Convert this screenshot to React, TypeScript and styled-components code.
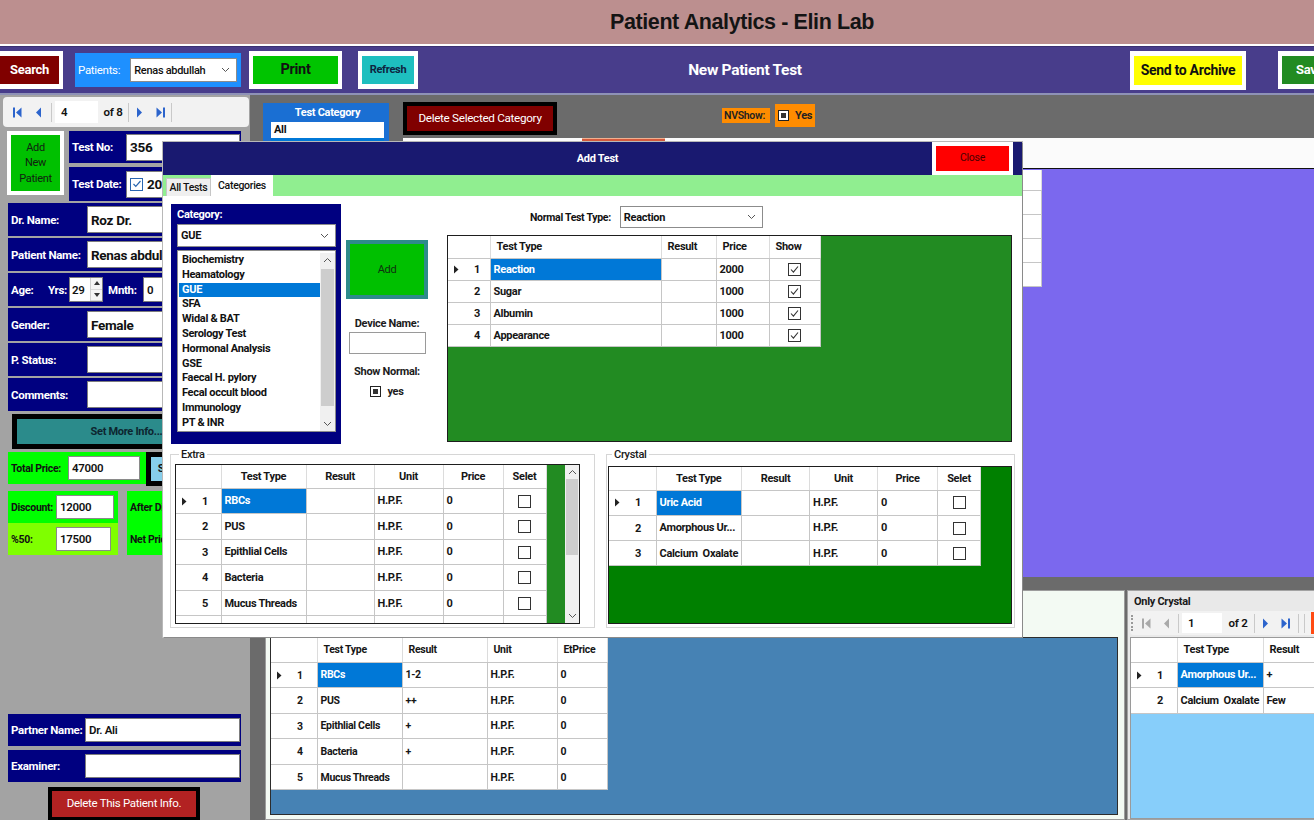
import React from "react";
import styled, { createGlobalStyle } from "styled-components";

const UI_FONT = `Roboto, "Liberation Sans", Arial, sans-serif`;

const GlobalStyle = createGlobalStyle`
  * { box-sizing: border-box; }
  html, body { margin: 0; padding: 0; }
  body {
    width: 1314px;
    height: 820px;
    overflow: hidden;
    background: #6b6b6b;
    font-family: ${UI_FONT};
    font-size: 11px;
    letter-spacing: -0.3px;
    color: #111;
  }
`;

/* ---------- page frame ---------- */

const Page = styled.div`
  position: relative;
  width: 1314px;
  height: 820px;
  display: flex;
  flex-direction: column;
  overflow: hidden;
`;

const TitleBar = styled.header`
  flex: none;
  height: 46px;
  background: #bc8f8f;
  border-bottom: 2px solid #ffffff;
  display: flex;
  align-items: center;
  justify-content: center;
  padding-left: 170px;
  font-family: "Liberation Sans", Arial, sans-serif;
  font-weight: 700;
  font-size: 21.5px;
  letter-spacing: -0.4px;
  color: #141414;
`;

const Toolbar = styled.div`
  flex: none;
  height: 49px;
  background: #483d8b;
  border-top: 1px solid #3a3172;
  border-bottom: 2px solid #8e92b6;
  display: flex;
  align-items: center;
`;

const FrameButton = styled.button<{
  $frame: string;
  $fill: string;
  $fg: string;
  $w: number;
  $h: number;
  $fs?: number;
  $bw?: number;
  $weight?: number;
}>`
  flex: none;
  width: ${(p) => p.$w}px;
  height: ${(p) => p.$h}px;
  border: ${(p) => p.$bw ?? 4}px solid ${(p) => p.$frame};
  background: ${(p) => p.$fill};
  color: ${(p) => p.$fg};
  font-family: inherit;
  letter-spacing: inherit;
  font-size: ${(p) => p.$fs ?? 11}px;
  font-weight: ${(p) => p.$weight ?? 700};
  padding: 0;
  margin: 0;
  display: flex;
  align-items: center;
  justify-content: center;
  text-align: center;
  line-height: 1.2;
  white-space: nowrap;
`;

const SearchButton = styled(FrameButton)`
  margin-left: -4px;
  border-top-width: 5px;
  border-bottom-width: 5px;
`;

const ToolbarButton = styled(FrameButton)<{ $ml: number }>`
  margin-left: ${(p) => p.$ml}px;
  border-top-width: 5px;
  border-bottom-width: 5px;
`;

const SaveButton = styled(ToolbarButton)`
  margin-right: -44px;
  justify-content: flex-start;
  padding-left: 14px;
`;

const PatientsBox = styled.div`
  flex: none;
  margin-left: 12px;
  width: 166px;
  height: 34px;
  background: #1e90ff;
  display: flex;
  align-items: center;
  padding-left: 3px;
  gap: 10px;
  color: #fff;
  font-size: 11.5px;
`;

const ComboBox = styled.div<{ $w: number; $h: number; $fs?: number; $weight?: number }>`
  flex: none;
  width: ${(p) => p.$w}px;
  height: ${(p) => p.$h}px;
  background: #fff;
  border: 1px solid #8c8c8c;
  display: flex;
  align-items: center;
  justify-content: space-between;
  padding: 0 6px 0 3px;
  font-weight: ${(p) => p.$weight ?? 700};
  font-size: ${(p) => p.$fs ?? 11}px;
  color: #111;
  white-space: nowrap;
`;

const ToolbarTitle = styled.div`
  flex: 1;
  text-align: center;
  padding-right: 58px;
  color: #fff;
  font-weight: 700;
  font-size: 15.5px;
`;

const Body = styled.div`
  flex: 1;
  min-height: 0;
  display: flex;
`;

/* ---------- left panel ---------- */

const LeftPanel = styled.aside`
  flex: none;
  width: 250px;
  background: #a3a3a3;
  display: flex;
  flex-direction: column;
  padding-top: 2px;
`;

const NavBar = styled.div<{ $h: number; $pl: number }>`
  flex: none;
  height: ${(p) => p.$h}px;
  background: #f2f2f2;
  border-radius: 4px;
  display: flex;
  align-items: center;
  padding-left: ${(p) => p.$pl}px;
  font-size: 11px;
  font-weight: 700;
  color: #111;
`;

const LeftNav = styled(NavBar)`
  margin: 0 1px 0 3px;
`;

const NavButton = styled.span<{ $w: number }>`
  flex: none;
  width: ${(p) => p.$w}px;
  display: flex;
  align-items: center;
  justify-content: center;
`;

const NavSep = styled.span<{ $mx: number }>`
  flex: none;
  width: 1px;
  height: 19px;
  margin: 0 ${(p) => p.$mx}px;
  background: #c9c9c9;
`;

const NavText = styled.div<{ $w: number; $h: number }>`
  flex: none;
  width: ${(p) => p.$w}px;
  height: ${(p) => p.$h}px;
  margin-left: 1px;
  background: #fff;
  display: flex;
  align-items: center;
  padding-left: 6px;
  font-size: 11.5px;
  font-weight: 600;
`;

const NavCount = styled.span<{ $w: number }>`
  flex: none;
  width: ${(p) => p.$w}px;
  text-align: center;
  font-size: 11.5px;
  font-weight: 600;
`;

const NavGrip = styled.span`
  flex: none;
  width: 5px;
  height: 16px;
  border-left: 2px dotted #9a9a9a;
  margin-left: 1px;
`;

const NavStop = styled.span`
  flex: none;
  width: 12px;
  height: 22px;
  background: #ff4a12;
  margin-left: 4px;
`;

const TopBlock = styled.div`
  flex: none;
  display: flex;
  margin-top: 4px;
  padding-left: 7px;
  gap: 5px;
`;

const AddPatientButton = styled(FrameButton)`
  line-height: 1.4;
  white-space: normal;
  padding: 0 6px;
`;

const TopFields = styled.div`
  flex: none;
  width: 172px;
  display: flex;
  flex-direction: column;
  gap: 4px;
`;

const FieldPanel = styled.div<{ $h: number; $ml?: number; $w?: number }>`
  flex: none;
  height: ${(p) => p.$h}px;
  width: ${(p) => (p.$w ? `${p.$w}px` : "auto")};
  margin-left: ${(p) => p.$ml ?? 0}px;
  background: #000080;
  display: flex;
  align-items: center;
  padding: 0 1px 0 3px;
  color: #fff;
`;

const FieldLabel = styled.span<{ $w: number }>`
  flex: none;
  width: ${(p) => p.$w}px;
  font-weight: 700;
  font-size: 11.5px;
  color: #fff;
  white-space: nowrap;
`;

const FieldInput = styled.div<{ $big?: boolean; $h?: number }>`
  flex: 1;
  min-width: 0;
  height: ${(p) => p.$h ?? 27}px;
  background: #fff;
  border: 1px solid #7d7d7d;
  display: flex;
  align-items: center;
  gap: 4px;
  padding: 0 3px;
  font-size: ${(p) => (p.$big ? 13.5 : 11.5)}px;
  font-weight: ${(p) => (p.$big ? 700 : 600)};
  color: #111;
  white-space: nowrap;
  overflow: hidden;
`;

const FieldList = styled.div`
  flex: none;
  margin-top: 2px;
  display: flex;
  flex-direction: column;
  gap: 2px;
  width: 241px;
`;

const AgeText = styled.span<{ $w: number }>`
  flex: none;
  width: ${(p) => p.$w}px;
  font-weight: 700;
  font-size: 11.5px;
  color: #fff;
  white-space: nowrap;
`;

const Spinner = styled.div`
  flex: none;
  width: 34px;
  height: 25px;
  background: #fff;
  border: 1px solid #7d7d7d;
  display: flex;
  align-items: center;
  justify-content: space-between;
  padding-left: 2px;
  font-size: 11.5px;
  font-weight: 600;
  color: #111;
`;

const SpinButtons = styled.div`
  flex: none;
  width: 12px;
  height: 100%;
  display: flex;
  flex-direction: column;
  border-left: 1px solid #cfcfcf;
`;

const SpinPart = styled.span`
  flex: 1;
  display: flex;
  align-items: center;
  justify-content: center;
  background: #f4f4f4;
  border-bottom: 1px solid #dadada;
`;

const MonthInput = styled(FieldInput)`
  flex: none;
  width: 40px;
  height: 25px;
  font-size: 11.5px;
  font-weight: 600;
`;

const MoreInfoButton = styled(FrameButton)`
  margin: 3px 0 0 12px;
  border-width: 5px;
`;

const PriceRow = styled.div`
  flex: none;
  display: flex;
  margin-top: 3px;
  padding-left: 8px;
`;

const LimeBox = styled.div<{ $w: number; $h: number; $bg?: string }>`
  flex: none;
  width: ${(p) => p.$w}px;
  height: ${(p) => p.$h}px;
  background: ${(p) => p.$bg ?? "#00ff00"};
  display: flex;
  align-items: center;
  padding-left: 3px;
  font-weight: 700;
  font-size: 10.5px;
  color: #111;
  white-space: nowrap;
  overflow: hidden;
`;

const LimeLabel = styled.span<{ $w: number }>`
  flex: none;
  width: ${(p) => p.$w}px;
`;

const LimeInput = styled.div<{ $w: number }>`
  flex: none;
  width: ${(p) => p.$w}px;
  height: 24px;
  background: #fff;
  border: 1px solid #8a8a8a;
  display: flex;
  align-items: center;
  padding-left: 3px;
  font-size: 11.5px;
  font-weight: 600;
`;

const DiscountRow = styled.div`
  flex: none;
  display: flex;
  margin-top: 5px;
  padding-left: 8px;
  gap: 9px;
`;

const StackBox = styled.div`
  flex: none;
  display: flex;
  flex-direction: column;
`;

const AfterBox = styled.div`
  flex: none;
  width: 60px;
  height: 64px;
  background: #00ff00;
  display: flex;
  flex-direction: column;
  justify-content: space-around;
  padding-left: 3px;
  font-weight: 700;
  font-size: 10.5px;
  white-space: nowrap;
`;

const LeftSpacer = styled.div`
  flex: 1;
`;

const BottomFields = styled.div`
  flex: none;
  display: flex;
  flex-direction: column;
  gap: 4px;
  padding-left: 8px;
`;

const DeletePatientButton = styled(FrameButton)`
  margin: 5px 0 -1px 48px;
`;

/* ---------- main area ---------- */

const MainArea = styled.main`
  flex: 1;
  min-width: 0;
  display: flex;
  flex-direction: column;
  background: #6b6b6b;
`;

const UpperSection = styled.div`
  flex: none;
  height: 482px;
  display: flex;
`;

const CategoryColumn = styled.div`
  flex: none;
  margin-left: 13px;
  padding-top: 8px;
`;

const TestCategoryBox = styled.div`
  width: 126px;
  height: 300px;
  background: #1a6fd3;
  display: flex;
  flex-direction: column;
  padding: 0 5px 0 8px;
`;

const TestCategoryTitle = styled.div`
  height: 19px;
  display: flex;
  align-items: center;
  justify-content: center;
  color: #fff;
  font-weight: 700;
  font-size: 11px;
`;

const TestCategoryList = styled.div`
  flex: 1;
  background: #fff;
`;

const ListItem = styled.div<{ $selected?: boolean; $h: number }>`
  height: ${(p) => p.$h}px;
  line-height: ${(p) => p.$h}px;
  padding-left: 3px;
  font-weight: 700;
  font-size: 11px;
  white-space: nowrap;
  background: ${(p) => (p.$selected ? "#0078d7" : "transparent")};
  color: ${(p) => (p.$selected ? "#fff" : "#111")};
`;

const WorkColumn = styled.div`
  flex: 1;
  min-width: 0;
  margin-left: 14px;
  display: flex;
  flex-direction: column;
`;

const ActionRow = styled.div`
  flex: none;
  height: 43px;
  display: flex;
  align-items: flex-start;
`;

const DeleteCategoryButton = styled(FrameButton)`
  margin-top: 7px;
`;

const NVShow = styled.div`
  flex: none;
  margin: 9px 0 0 165px;
  display: flex;
  align-items: flex-start;
  gap: 5px;
`;

const NVLabel = styled.span`
  margin-top: 4px;
  height: 15px;
  width: 48px;
  background: #ff8c00;
  display: flex;
  align-items: center;
  padding-left: 2px;
  font-size: 10.5px;
  font-weight: 600;
  color: #222;
`;

const NVCheck = styled.span`
  height: 23px;
  width: 40px;
  background: #ff8c00;
  display: flex;
  align-items: center;
  gap: 6px;
  padding-left: 3px;
  font-size: 11px;
  font-weight: 700;
  color: #222;
`;

const FilledCheck = styled.span<{ $size: number }>`
  flex: none;
  width: ${(p) => p.$size}px;
  height: ${(p) => p.$size}px;
  border: 1px solid #222;
  background: #fff;
  padding: 2px;
  display: flex;
  &::after {
    content: "";
    flex: 1;
    background: #333;
  }
`;

const ResultsPanel = styled.div`
  flex: 1;
  display: flex;
  flex-direction: column;
`;

const ResultsStrip = styled.div`
  flex: none;
  height: 31px;
  background: #fbfbfb;
  border-bottom: 1px solid #111;
  display: flex;
  align-items: flex-start;
  padding-left: 179px;
`;

const StripButton = styled.span`
  flex: none;
  width: 83px;
  height: 24px;
  background: #d45a3c;
  border-top: 1px solid #f0b090;
`;

const ResultsBody = styled.div`
  flex: 1;
  background: #7b68ee;
  padding-top: 1px;
`;

const LowerSection = styled.div`
  flex: 1;
  display: flex;
  padding: 13px 0 0 15px;
  gap: 2px;
`;

const BottomPanel = styled.div`
  flex: none;
  width: 860px;
  height: 230px;
  background: #f3faf3;
  border: 1px solid #9c9c9c;
  padding: 46px 6px 4px 4px;
  display: flex;
`;

const GridFrame = styled.div<{ $bg: string; $w?: number; $h?: number; $border?: string }>`
  flex: ${(p) => (p.$w ? "none" : "1")};
  width: ${(p) => (p.$w ? `${p.$w}px` : "auto")};
  height: ${(p) => (p.$h ? `${p.$h}px` : "100%")};
  background: ${(p) => p.$bg};
  border: 1px solid ${(p) => p.$border ?? "#1e1e1e"};
  display: flex;
  overflow: hidden;
`;

const GridFill = styled.div`
  flex: 1;
`;

const OnlyCrystalBox = styled.section`
  flex: none;
  width: 200px;
  height: 230px;
  background: #e9e9e9;
  border: 1px solid #a3a3a3;
  padding: 0 0 0 2px;
  display: flex;
  flex-direction: column;
`;

const GroupTitle = styled.div`
  flex: none;
  height: 20px;
  display: flex;
  align-items: center;
  padding-left: 4px;
  font-size: 11px;
  font-weight: 700;
  color: #1a1a1a;
`;

const CrystalNav = styled(NavBar)`
  margin-bottom: 2px;
`;

/* ---------- data grid ---------- */

const GridTable = styled.table<{ $fs: number }>`
  flex: none;
  align-self: flex-start;
  border-collapse: collapse;
  table-layout: fixed;
  background: #fff;
  font-size: ${(p) => p.$fs}px;
  font-weight: 700;
  color: #161616;
`;

const GridCol = styled.col<{ $w: number }>`
  width: ${(p) => p.$w}px;
`;

const GridRow = styled.tr<{ $h: number }>`
  height: ${(p) => p.$h}px;
`;

const HeadCell = styled.th<{ $align: "left" | "center" }>`
  padding: 0 6px;
  text-align: ${(p) => p.$align};
  font-weight: 700;
  white-space: nowrap;
  overflow: hidden;
  border-right: 1px solid #dcdcdc;
  border-bottom: 1px solid #c6c6c6;
`;

const RowHeadCell = styled.td`
  padding: 0 0 0 6px;
  white-space: nowrap;
  border-right: 1px solid #c6c6c6;
  border-bottom: 1px solid #c6c6c6;
`;

const RowMark = styled.span`
  display: inline-flex;
  width: 14px;
  vertical-align: middle;
`;

const RowNum = styled.span`
  display: inline-block;
  padding-left: 6px;
  vertical-align: middle;
`;

const BodyCell = styled.td<{ $selected?: boolean; $center?: boolean }>`
  padding: 0 3px;
  white-space: pre;
  overflow: hidden;
  text-overflow: ellipsis;
  text-align: ${(p) => (p.$center ? "center" : "left")};
  border-right: 1px solid #c6c6c6;
  border-bottom: 1px solid #c6c6c6;
  background: ${(p) => (p.$selected ? "#0078d7" : "#fff")};
  color: ${(p) => (p.$selected ? "#fff" : "#161616")};
`;

const CheckBox = styled.span`
  display: inline-flex;
  align-items: center;
  justify-content: center;
  width: 13px;
  height: 13px;
  border: 1px solid #333;
  background: #fff;
  vertical-align: middle;
`;

type CellValue = string | { check: boolean };

interface GridColumn {
  title: string;
  width: number;
}

interface DataGridProps {
  columns: GridColumn[];
  rows: CellValue[][];
  rowHead: number;
  headH: number;
  rowH: number;
  fs?: number;
  headAlign?: "left" | "center";
  select?: boolean;
}

const CheckMark = () => (
  <svg width="11" height="11" viewBox="0 0 11 11">
    <path d="M2 5.5l2.4 2.6L9 2.5" stroke="#333" strokeWidth="1.1" fill="none" />
  </svg>
);

const RowArrow = () => (
  <svg width="5" height="9" viewBox="0 0 5 9">
    <path d="M0 0.5L4.5 4.5L0 8.5Z" fill="#222" />
  </svg>
);

const DataGrid = ({
  columns,
  rows,
  rowHead,
  headH,
  rowH,
  fs = 11,
  headAlign = "left",
  select = true,
}: DataGridProps) => (
  <GridTable $fs={fs}>
    <colgroup>
      <GridCol $w={rowHead} />
      {columns.map((c) => (
        <GridCol key={c.title} $w={c.width} />
      ))}
    </colgroup>
    <tbody>
      <GridRow $h={headH}>
        <HeadCell $align="left" />
        {columns.map((c) => (
          <HeadCell key={c.title} $align={headAlign}>
            {c.title}
          </HeadCell>
        ))}
      </GridRow>
      {rows.map((row, i) => (
        <GridRow key={i} $h={rowH}>
          <RowHeadCell>
            <RowMark>{i === 0 && select ? <RowArrow /> : null}</RowMark>
            <RowNum>{i + 1}</RowNum>
          </RowHeadCell>
          {row.map((cell, j) =>
            typeof cell === "string" ? (
              <BodyCell key={j} $selected={select && i === 0 && j === 0}>
                {cell}
              </BodyCell>
            ) : (
              <BodyCell key={j} $center>
                <CheckBox>{cell.check ? <CheckMark /> : null}</CheckBox>
              </BodyCell>
            )
          )}
        </GridRow>
      ))}
    </tbody>
  </GridTable>
);

/* ---------- icons ---------- */

type NavKind = "first" | "prev" | "next" | "last";

const NavGlyph = ({ kind, color }: { kind: NavKind; color: string }) => (
  <svg width="11" height="13" viewBox="0 0 11 13" fill={color}>
    {kind === "first" && (
      <>
        <rect x="1" y="1.5" width="2" height="10" />
        <path d="M9.5 1.5L4 6.5L9.5 11.5Z" />
      </>
    )}
    {kind === "prev" && <path d="M8 1.5L3 6.5L8 11.5Z" />}
    {kind === "next" && <path d="M3 1.5L8 6.5L3 11.5Z" />}
    {kind === "last" && (
      <>
        <path d="M1.5 1.5L7 6.5L1.5 11.5Z" />
        <rect x="8" y="1.5" width="2" height="10" />
      </>
    )}
  </svg>
);

const Chevron = ({ up }: { up?: boolean }) => (
  <svg width="9" height="6" viewBox="0 0 9 6">
    <path
      d={up ? "M1 5L4.5 1.5L8 5" : "M1 1L4.5 4.5L8 1"}
      stroke="#555"
      strokeWidth="1"
      fill="none"
    />
  </svg>
);

const SpinArrow = ({ up }: { up?: boolean }) => (
  <svg width="6" height="4" viewBox="0 0 6 4">
    <path d={up ? "M0 4L3 0L6 4Z" : "M0 0L3 4L6 0Z"} fill="#333" />
  </svg>
);

const DateCheck = styled.span`
  flex: none;
  width: 13px;
  height: 13px;
  border: 1px solid #2a66b0;
  display: inline-flex;
  align-items: center;
  justify-content: center;
`;

/* ---------- dialog ---------- */

const Dialog = styled.section`
  position: absolute;
  left: 163px;
  top: 142px;
  width: 859px;
  height: 495px;
  background: #fff;
  box-shadow: 1px 1px 0 #8a8a8a, 0 0 0 1px #b8b8b8;
  display: flex;
  flex-direction: column;
`;

const DialogTitleBar = styled.div`
  flex: none;
  height: 33px;
  background: #191970;
  display: flex;
  align-items: stretch;
`;

const DialogTitle = styled.div`
  flex: 1;
  display: flex;
  align-items: center;
  justify-content: center;
  padding-left: 100px;
  color: #fff;
  font-weight: 700;
  font-size: 11px;
`;

const CloseButton = styled(FrameButton)`
  margin-right: 9px;
`;

const TabStrip = styled.div`
  flex: none;
  height: 21px;
  background: #90ee90;
  display: flex;
  align-items: flex-end;
  padding-left: 3px;
`;

const Tab = styled.div<{ $active?: boolean; $w: number }>`
  width: ${(p) => p.$w}px;
  height: ${(p) => (p.$active ? 21 : 18)}px;
  background: ${(p) => (p.$active ? "#fff" : "#efefef")};
  border: ${(p) => (p.$active ? "none" : "1px solid #c6c6c6")};
  border-bottom: none;
  display: flex;
  align-items: center;
  justify-content: center;
  font-size: 10.5px;
  font-weight: 500;
  color: #111;
  white-space: nowrap;
`;

const DialogBody = styled.div`
  flex: 1;
  display: flex;
  flex-direction: column;
  padding-top: 8px;
`;

const DialogUpper = styled.div`
  flex: none;
  height: 240px;
  display: flex;
  padding-left: 8px;
`;

const CategoryPanel = styled.div`
  flex: none;
  width: 170px;
  background: #000080;
  display: flex;
  flex-direction: column;
  padding: 2px 5px 0 6px;
`;

const CategoryLabel = styled.div`
  height: 17px;
  display: flex;
  align-items: center;
  color: #fff;
  font-weight: 700;
  font-size: 11px;
`;

const CategoryCombo = styled(ComboBox)`
  margin-top: 1px;
`;

const ListBox = styled.div`
  margin-top: 3px;
  height: 182px;
  background: #fff;
  border: 1px solid #8c8c8c;
  display: flex;
  padding: 2px 0 0 1px;
`;

const ListItems = styled.div`
  flex: 1;
`;

const ScrollBar = styled.div<{ $w: number; $thumbTop: number; $thumbH: number }>`
  flex: none;
  width: ${(p) => p.$w}px;
  position: relative;
  background: #f0f0f0;
  display: flex;
  flex-direction: column;
  justify-content: space-between;
  align-items: center;
  padding: 4px 0;
  &::before {
    content: "";
    position: absolute;
    left: 1px;
    right: 1px;
    top: ${(p) => p.$thumbTop}px;
    height: ${(p) => p.$thumbH}px;
    background: #cdcdcd;
  }
`;

const MiddleColumn = styled.div`
  flex: none;
  width: 82px;
  margin-left: 5px;
  display: flex;
  flex-direction: column;
  align-items: center;
`;

const AddButton = styled(FrameButton)`
  margin-top: 36px;
`;

const SmallLabel = styled.div<{ $mt: number }>`
  margin-top: ${(p) => p.$mt}px;
  height: 18px;
  display: flex;
  align-items: center;
  font-weight: 700;
  font-size: 11px;
  color: #1c1c1c;
  white-space: nowrap;
`;

const PlainInput = styled.div<{ $w: number; $h: number }>`
  width: ${(p) => p.$w}px;
  height: ${(p) => p.$h}px;
  background: #fff;
  border: 1px solid #9a9a9a;
`;

const CheckRow = styled.div`
  margin-top: 5px;
  display: flex;
  align-items: center;
  gap: 6px;
  font-weight: 700;
  font-size: 11px;
  color: #1c1c1c;
`;

const RightColumn = styled.div`
  flex: none;
  width: 565px;
  margin-left: 19px;
  display: flex;
  flex-direction: column;
`;

const NormalTypeRow = styled.div`
  flex: none;
  height: 22px;
  margin-top: 2px;
  display: flex;
  align-items: center;
  padding-left: 83px;
  gap: 9px;
  font-weight: 700;
  font-size: 10.5px;
`;

const NormalGridWrap = styled.div`
  margin-top: 7px;
  height: 207px;
  display: flex;
`;

const DialogLower = styled.div`
  flex: none;
  height: 179px;
  margin-top: 4px;
  display: flex;
  padding-left: 7px;
  gap: 11px;
`;

const GroupBox = styled.fieldset<{ $w: number; $pl: number }>`
  flex: none;
  width: ${(p) => p.$w}px;
  height: 180px;
  margin: 0;
  min-inline-size: 0;
  border: 1px solid #d6d6d6;
  padding: 0 2px 2px ${(p) => p.$pl}px;
  display: flex;
  flex-direction: column;
`;

const GroupLegend = styled.legend`
  padding: 0 2px;
  margin-left: 4px;
  font-size: 11px;
  font-weight: 500;
  color: #1a1a1a;
`;

const GroupGridWrap = styled.div<{ $mt: number; $h: number }>`
  margin-top: ${(p) => p.$mt}px;
  height: ${(p) => p.$h}px;
  display: flex;
`;

/* ---------- data ---------- */

const categories = [
  "Biochemistry",
  "Heamatology",
  "GUE",
  "SFA",
  "Widal & BAT",
  "Serology Test",
  "Hormonal Analysis",
  "GSE",
  "Faecal H. pylory",
  "Fecal occult blood",
  "Immunology",
  "PT & INR",
];

const normalCols: GridColumn[] = [
  { title: "Test Type", width: 171 },
  { title: "Result", width: 55 },
  { title: "Price", width: 53 },
  { title: "Show", width: 51 },
];

const on = { check: true };
const off = { check: false };

const normalRows: CellValue[][] = [
  ["Reaction", "", "2000", on],
  ["Sugar", "", "1000", on],
  ["Albumin", "", "1000", on],
  ["Appearance", "", "1000", on],
];

const extraCols: GridColumn[] = [
  { title: "Test Type", width: 85 },
  { title: "Result", width: 68 },
  { title: "Unit", width: 69 },
  { title: "Price", width: 60 },
  { title: "Selet", width: 43 },
];

const extraRows: CellValue[][] = [
  ["RBCs", "", "H.P.F.", "0", off],
  ["PUS", "", "H.P.F.", "0", off],
  ["Epithlial Cells", "", "H.P.F.", "0", off],
  ["Bacteria", "", "H.P.F.", "0", off],
  ["Mucus Threads", "", "H.P.F.", "0", off],
  ["", "", "", "", off],
];

const crystalCols: GridColumn[] = [
  { title: "Test Type", width: 85 },
  { title: "Result", width: 68 },
  { title: "Unit", width: 68 },
  { title: "Price", width: 60 },
  { title: "Selet", width: 43 },
];

const crystalRows: CellValue[][] = [
  ["Uric Acid", "", "H.P.F.", "0", off],
  ["Amorphous Ur...", "", "H.P.F.", "0", off],
  ["Calcium  Oxalate", "", "H.P.F.", "0", off],
];

const bottomCols: GridColumn[] = [
  { title: "Test Type", width: 85 },
  { title: "Result", width: 85 },
  { title: "Unit", width: 70 },
  { title: "EtPrice", width: 50 },
];

const bottomRows: CellValue[][] = [
  ["RBCs", "1-2", "H.P.F.", "0"],
  ["PUS", "++", "H.P.F.", "0"],
  ["Epithlial Cells", "+", "H.P.F.", "0"],
  ["Bacteria", "+", "H.P.F.", "0"],
  ["Mucus Threads", "", "H.P.F.", "0"],
];

const onlyCols: GridColumn[] = [
  { title: "Test Type", width: 86 },
  { title: "Result", width: 80 },
];

const onlyRows: CellValue[][] = [
  ["Amorphous Ur...", "+"],
  ["Calcium  Oxalate", "Few"],
];

const resultCols: GridColumn[] = [
  { title: "Test Type", width: 200 },
  { title: "Result", width: 150 },
  { title: "Unit", width: 140 },
  { title: "Normal", width: 108 },
];

const resultRows: CellValue[][] = [
  ["Reaction", "Acidic", "", ""],
  ["Sugar", "Nil", "", ""],
  ["Albumin", "Nil", "", ""],
  ["Appearance", "Clear", "", ""],
];

/* ---------- app ---------- */

export default function App() {
  return (
    <>
      <GlobalStyle />
      <Page>
        <TitleBar>Patient Analytics - Elin Lab</TitleBar>

        <Toolbar>
          <SearchButton $frame="#fff" $fill="#800000" $fg="#fff" $w={67} $h={38} $fs={13}>
            Search
          </SearchButton>
          <PatientsBox>
            <span>Patients:</span>
            <ComboBox $w={107} $h={24} $fs={11} $weight={500}>
              <span>Renas abdullah</span>
              <Chevron />
            </ComboBox>
          </PatientsBox>
          <ToolbarButton $ml={8} $frame="#fff" $fill="#00c400" $fg="#111" $w={93} $h={38} $fs={14.5}>
            Print
          </ToolbarButton>
          <ToolbarButton $ml={16} $frame="#fff" $fill="#1ebfbf" $fg="#0e2440" $w={60} $h={38} $fs={11}>
            Refresh
          </ToolbarButton>
          <ToolbarTitle>New Patient Test</ToolbarTitle>
          <ToolbarButton $ml={0} $frame="#fff" $fill="#ffff00" $fg="#111" $w={116} $h={39} $fs={14}>
            Send to Archive
          </ToolbarButton>
          <SaveButton $ml={32} $frame="#fff" $fill="#228b22" $fg="#fff" $w={80} $h={38} $fs={13}>
            Save
          </SaveButton>
        </Toolbar>

        <Body>
          <LeftPanel>
            <LeftNav $h={30} $pl={4}>
              <NavButton $w={21}>
                <NavGlyph kind="first" color="#2c64cc" />
              </NavButton>
              <NavButton $w={21}>
                <NavGlyph kind="prev" color="#2c64cc" />
              </NavButton>
              <NavSep $mx={2} />
              <NavText $w={43} $h={22}>4</NavText>
              <NavCount $w={30}>of 8</NavCount>
              <NavSep $mx={0} />
              <NavButton $w={21}>
                <NavGlyph kind="next" color="#2c64cc" />
              </NavButton>
              <NavButton $w={21}>
                <NavGlyph kind="last" color="#2c64cc" />
              </NavButton>
              <NavSep $mx={0} />
            </LeftNav>

            <TopBlock>
              <AddPatientButton
                $frame="#fff"
                $fill="#00c000"
                $fg="#112211"
                $w={57}
                $h={64}
                $fs={11}
                $weight={400}
              >
                Add New Patient
              </AddPatientButton>
              <TopFields>
                <FieldPanel $h={32}>
                  <FieldLabel $w={54}>Test No:</FieldLabel>
                  <FieldInput $big>356</FieldInput>
                </FieldPanel>
                <FieldPanel $h={34}>
                  <FieldLabel $w={54}>Test Date:</FieldLabel>
                  <FieldInput $big>
                    <DateCheck>
                      <svg width="10" height="10" viewBox="0 0 10 10">
                        <path d="M1.5 5l2.3 2.4L8.5 2" stroke="#2a66b0" strokeWidth="1.2" fill="none" />
                      </svg>
                    </DateCheck>
                    2022/04/17
                  </FieldInput>
                </FieldPanel>
              </TopFields>
            </TopBlock>

            <FieldList>
              <FieldPanel $h={33} $ml={8}>
                <FieldLabel $w={76}>Dr. Name:</FieldLabel>
                <FieldInput $big>Roz Dr.</FieldInput>
              </FieldPanel>
              <FieldPanel $h={33} $ml={8}>
                <FieldLabel $w={76}>Patient Name:</FieldLabel>
                <FieldInput $big>Renas abdullah</FieldInput>
              </FieldPanel>
              <FieldPanel $h={33} $ml={8}>
                <AgeText $w={37}>Age:</AgeText>
                <AgeText $w={21}>Yrs:</AgeText>
                <Spinner>
                  29
                  <SpinButtons>
                    <SpinPart>
                      <SpinArrow up />
                    </SpinPart>
                    <SpinPart>
                      <SpinArrow />
                    </SpinPart>
                  </SpinButtons>
                </Spinner>
                <AgeText $w={40}>&nbsp;&nbsp;Mnth:</AgeText>
                <MonthInput>0</MonthInput>
              </FieldPanel>
              <FieldPanel $h={33} $ml={8}>
                <FieldLabel $w={76}>Gender:</FieldLabel>
                <FieldInput $big>Female</FieldInput>
              </FieldPanel>
              <FieldPanel $h={33} $ml={8}>
                <FieldLabel $w={76}>P. Status:</FieldLabel>
                <FieldInput />
              </FieldPanel>
              <FieldPanel $h={33} $ml={8}>
                <FieldLabel $w={76}>Comments:</FieldLabel>
                <FieldInput />
              </FieldPanel>
            </FieldList>

            <MoreInfoButton $frame="#000" $fill="#2b8b8b" $fg="#0d2630" $w={229} $h={35} $fs={11}>
              Set More Info...
            </MoreInfoButton>

            <PriceRow>
              <LimeBox $w={138} $h={32}>
                <LimeLabel $w={57}>Total Price:</LimeLabel>
                <LimeInput $w={72}>47000</LimeInput>
              </LimeBox>
              <FrameButton $frame="#000" $fill="#87ceeb" $fg="#111" $w={30} $h={34} $bw={5} $fs={11}>
                S
              </FrameButton>
            </PriceRow>

            <DiscountRow>
              <StackBox>
                <LimeBox $w={110} $h={32}>
                  <LimeLabel $w={45}>Discount:</LimeLabel>
                  <LimeInput $w={58}>12000</LimeInput>
                </LimeBox>
                <LimeBox $w={110} $h={32} $bg="#7fff00">
                  <LimeLabel $w={45}>%50:</LimeLabel>
                  <LimeInput $w={55}>17500</LimeInput>
                </LimeBox>
              </StackBox>
              <AfterBox>
                <span>After Discount:</span>
                <span>Net Price:</span>
              </AfterBox>
            </DiscountRow>

            <LeftSpacer />

            <BottomFields>
              <FieldPanel $h={32} $w={233}>
                <FieldLabel $w={74}>Partner Name:</FieldLabel>
                <FieldInput $h={24}>Dr. Ali</FieldInput>
              </FieldPanel>
              <FieldPanel $h={32} $w={233}>
                <FieldLabel $w={74}>Examiner:</FieldLabel>
                <FieldInput $h={24} />
              </FieldPanel>
            </BottomFields>

            <DeletePatientButton
              $frame="#000"
              $fill="#b22222"
              $fg="#fff"
              $w={152}
              $h={34}
              $fs={11.5}
              $weight={400}
            >
              Delete This Patient Info.
            </DeletePatientButton>
          </LeftPanel>

          <MainArea>
            <UpperSection>
              <CategoryColumn>
                <TestCategoryBox>
                  <TestCategoryTitle>Test Category</TestCategoryTitle>
                  <TestCategoryList>
                    <ListItem $h={16}>All</ListItem>
                    <ListItem $h={16} $selected>
                      Biochemistry
                    </ListItem>
                    <ListItem $h={16}>Heamatology</ListItem>
                  </TestCategoryList>
                </TestCategoryBox>
              </CategoryColumn>

              <WorkColumn>
                <ActionRow>
                  <DeleteCategoryButton
                    $frame="#000"
                    $fill="#800000"
                    $fg="#fff"
                    $w={154}
                    $h={33}
                    $fs={11.7}
                    $weight={400}
                  >
                    Delete Selected Category
                  </DeleteCategoryButton>
                  <NVShow>
                    <NVLabel>NVShow:</NVLabel>
                    <NVCheck>
                      <FilledCheck $size={11} />
                      Yes
                    </NVCheck>
                  </NVShow>
                </ActionRow>
                <ResultsPanel>
                  <ResultsStrip>
                    <StripButton />
                  </ResultsStrip>
                  <ResultsBody>
                    <DataGrid
                      columns={resultCols}
                      rows={resultRows}
                      rowHead={40}
                      headH={20}
                      rowH={24}
                      select={false}
                    />
                  </ResultsBody>
                </ResultsPanel>
              </WorkColumn>
            </UpperSection>

            <LowerSection>
              <BottomPanel>
                <GridFrame $bg="#4682b4" $border="#2c2c2c">
                  <DataGrid columns={bottomCols} rows={bottomRows} rowHead={46} headH={24} rowH={25.6} fs={10.5} />
                </GridFrame>
              </BottomPanel>

              <OnlyCrystalBox>
                <GroupTitle>Only Crystal</GroupTitle>
                <CrystalNav $h={24} $pl={0}>
                  <NavGrip />
                  <NavButton $w={20}>
                    <NavGlyph kind="first" color="#a9a9a9" />
                  </NavButton>
                  <NavButton $w={20}>
                    <NavGlyph kind="prev" color="#a9a9a9" />
                  </NavButton>
                  <NavSep $mx={2} />
                  <NavText $w={40} $h={20}>1</NavText>
                  <NavCount $w={32}>of 2</NavCount>
                  <NavSep $mx={0} />
                  <NavButton $w={20}>
                    <NavGlyph kind="next" color="#2c64cc" />
                  </NavButton>
                  <NavButton $w={20}>
                    <NavGlyph kind="last" color="#2c64cc" />
                  </NavButton>
                  <NavSep $mx={3} />
                  <NavSep $mx={2} />
                  <NavStop />
                </CrystalNav>
                <GridFrame $bg="#87cefa" $h={178} $border="#9a9a9a">
                  <DataGrid columns={onlyCols} rows={onlyRows} rowHead={46} headH={24} rowH={25.5} fs={11} />
                </GridFrame>
              </OnlyCrystalBox>
            </LowerSection>
          </MainArea>
        </Body>

        <Dialog>
          <DialogTitleBar>
            <DialogTitle>Add Test</DialogTitle>
            <CloseButton $frame="#fff" $fill="#ff0000" $fg="#4a0000" $w={81} $h={33} $fs={10.5} $weight={400}>
              Close
            </CloseButton>
          </DialogTitleBar>
          <TabStrip>
            <Tab $w={45}>All Tests</Tab>
            <Tab $w={62} $active>
              Categories
            </Tab>
          </TabStrip>
          <DialogBody>
            <DialogUpper>
              <CategoryPanel>
                <CategoryLabel>Category:</CategoryLabel>
                <CategoryCombo $w={159} $h={23} $fs={11}>
                  <span>GUE</span>
                  <Chevron />
                </CategoryCombo>
                <ListBox>
                  <ListItems>
                    {categories.map((c) => (
                      <ListItem key={c} $h={14.8} $selected={c === "GUE"}>
                        {c}
                      </ListItem>
                    ))}
                  </ListItems>
                  <ScrollBar $w={15} $thumbTop={16} $thumbH={137}>
                    <Chevron up />
                    <Chevron />
                  </ScrollBar>
                </ListBox>
              </CategoryPanel>

              <MiddleColumn>
                <AddButton $frame="#2e8b8b" $fill="#00c000" $fg="#103010" $w={82} $h={59} $fs={11} $weight={400}>
                  Add
                </AddButton>
                <SmallLabel $mt={15}>Device Name:</SmallLabel>
                <PlainInput $w={77} $h={22} />
                <SmallLabel $mt={8}>Show Normal:</SmallLabel>
                <CheckRow>
                  <FilledCheck $size={11} />
                  yes
                </CheckRow>
              </MiddleColumn>

              <RightColumn>
                <NormalTypeRow>
                  <span>Normal Test Type:</span>
                  <ComboBox $w={143} $h={22} $fs={11}>
                    <span>Reaction</span>
                    <Chevron />
                  </ComboBox>
                </NormalTypeRow>
                <NormalGridWrap>
                  <GridFrame $bg="#228b22">
                    <DataGrid columns={normalCols} rows={normalRows} rowHead={42} headH={22} rowH={22} />
                  </GridFrame>
                </NormalGridWrap>
              </RightColumn>
            </DialogUpper>

            <DialogLower>
              <GroupBox $w={425} $pl={4}>
                <GroupLegend>Extra</GroupLegend>
                <GroupGridWrap $mt={3} $h={160}>
                  <GridFrame $bg="#228b22" $w={405}>
                    <DataGrid
                      columns={extraCols}
                      rows={extraRows}
                      rowHead={45}
                      headH={23}
                      rowH={25.6}
                      headAlign="center"
                    />
                    <GridFill />
                    <ScrollBar $w={14} $thumbTop={14} $thumbH={76}>
                      <Chevron up />
                      <Chevron />
                    </ScrollBar>
                  </GridFrame>
                </GroupGridWrap>
              </GroupBox>

              <GroupBox $w={409} $pl={1}>
                <GroupLegend>Crystal</GroupLegend>
                <GroupGridWrap $mt={5} $h={158}>
                  <GridFrame $bg="#008000" $w={404}>
                    <DataGrid
                      columns={crystalCols}
                      rows={crystalRows}
                      rowHead={47}
                      headH={23}
                      rowH={25.3}
                      headAlign="center"
                    />
                  </GridFrame>
                </GroupGridWrap>
              </GroupBox>
            </DialogLower>
          </DialogBody>
        </Dialog>
      </Page>
    </>
  );
}
